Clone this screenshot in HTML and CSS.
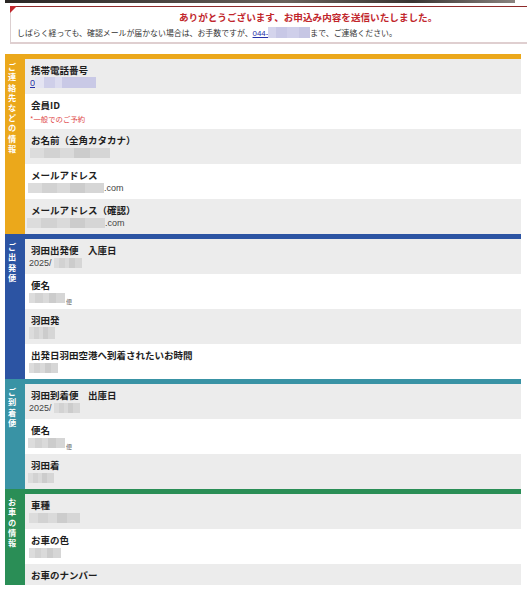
FILE: index.html
```html
<!DOCTYPE html>
<html lang="ja">
<head>
<meta charset="utf-8">
<title>送信完了</title>
<link rel="stylesheet" href="styles.css">
</head>
<body>
<div class="page">
  <div class="hero"></div>
  <div class="notice">
    <span class="corner"></span>
    <p class="notice-title">ありがとうございます、お申込み内容を送信いたしました。</p>
    <p class="notice-text">しばらく経っても、確認メールが届かない場合は、お手数ですが、<a class="tel" href="#">044-</a><span class="blur blur-tel"></span>まで、ご連絡ください。</p>
  </div>

  <section class="sec sec-orange">
    <div class="sec-side"><span class="sec-name">ご連絡先などの情報</span></div>
    <div class="sec-rows">
      <div class="row"><div class="lbl">携帯電話番号</div><div class="val"><a class="tel-val" href="#">0</a><span class="blur blur-purple w61"></span></div></div>
      <div class="row"><div class="lbl">会員ID</div><div class="val note">*一般でのご予約</div></div>
      <div class="row"><div class="lbl">お名前（全角カタカナ）</div><div class="val"><span class="blur w80 ml1"></span></div></div>
      <div class="row"><div class="lbl">メールアドレス</div><div class="val"><span class="blur w76 mlm1"></span>.com</div></div>
      <div class="row"><div class="lbl">メールアドレス（確認）</div><div class="val"><span class="blur w78 mlm2"></span>.com</div></div>
    </div>
  </section>

  <section class="sec sec-blue">
    <div class="sec-side"><span class="sec-name">ご出発便</span></div>
    <div class="sec-rows">
      <div class="row"><div class="lbl">羽田出発便　入庫日</div><div class="val">2025/<span class="blur w28 ml2"></span></div></div>
      <div class="row"><div class="lbl">便名</div><div class="val"><span class="blur w36"></span><span class="bin">便</span></div></div>
      <div class="row"><div class="lbl">羽田発</div><div class="val"><span class="blur w26 tall"></span></div></div>
      <div class="row"><div class="lbl">出発日羽田空港へ到着されたいお時間</div><div class="val"><span class="blur w29"></span></div></div>
    </div>
  </section>

  <section class="sec sec-teal">
    <div class="sec-side"><span class="sec-name">ご到着便</span></div>
    <div class="sec-rows">
      <div class="row"><div class="lbl">羽田到着便　出庫日</div><div class="val">2025/<span class="blur w26 ml2"></span></div></div>
      <div class="row"><div class="lbl">便名</div><div class="val"><span class="blur w37 mlm1"></span><span class="bin">便</span></div></div>
      <div class="row"><div class="lbl">羽田着</div><div class="val"><span class="blur w26 mlm1"></span></div></div>
    </div>
  </section>

  <section class="sec sec-green">
    <div class="sec-side"><span class="sec-name">お車の情報</span></div>
    <div class="sec-rows">
      <div class="row"><div class="lbl">車種</div><div class="val"><span class="blur w51"></span></div></div>
      <div class="row"><div class="lbl">お車の色</div><div class="val"><span class="blur w32"></span></div></div>
      <div class="row row-last"><div class="lbl">お車のナンバー</div></div>
    </div>
  </section>
</div>
</body>
</html>
```

FILE: styles.css
```css
html, body {
  margin: 0;
  padding: 0;
  background: #ffffff;
}
body {
  font-family: "Liberation Sans", "Noto Sans CJK JP", sans-serif;
  color: #222222;
  overflow: hidden;
}
.page {
  width: 527px;
  padding: 0 0 0 5px;
  box-sizing: border-box;
}
.hero {
  width: 510px;
  height: 3px;
  background: linear-gradient(90deg, #2a2624 0%, #4a4440 30%, #6a625c 55%, #3a3532 80%, #8a8480 100%);
}
.notice {
  position: relative;
  margin: 3px 0 0 5px;
  width: 530px;
  height: 38px;
  border-top: 1px solid #8e2a2a;
  border-left: 1px solid #dccfd0;
  border-bottom: 2px solid #dfcfd0;
  padding: 4px 0 0 6px;
  box-sizing: border-box;
  background: #ffffff;
}
.corner {
  position: absolute;
  left: -1px;
  top: -1px;
  width: 0;
  height: 0;
  border-top: 7px solid #c1262c;
  border-right: 7px solid transparent;
}
.notice-title {
  margin: 0 0 3px 162px;
  height: 13px;
  font-size: 9.6px;
  line-height: 13px;
  font-weight: bold;
  color: #c1262c;
  white-space: nowrap;
}
.notice-text {
  margin: 0;
  height: 12px;
  font-size: 7.9px;
  line-height: 12px;
  color: #333333;
  white-space: nowrap;
}
.tel {
  color: #2630a8;
  text-decoration: underline;
}
.blur {
  display: inline-block;
  height: 10px;
  vertical-align: -2px;
  background: linear-gradient(90deg, #dcdcdc 0 18%, #d2d2d2 18% 38%, #dadada 38% 55%, #cccccc 55% 75%, #d6d6d6 75% 100%);
}
.blur-tel {
  width: 42px;
  height: 11px;
  background: linear-gradient(90deg, #d4d4ec 0 20%, #c8c8e6 20% 45%, #cfcfea 45% 75%, #c6c6e4 75% 100%);
}
.blur-purple {
  height: 11px;
  background: linear-gradient(90deg, #e4e4f2 0 14%, #cfcfe9 14% 32%, #dcdcef 32% 44%, #c9c9e6 44% 100%);
}
.w26 { width: 26px; }
.w28 { width: 28px; }
.w29 { width: 29px; }
.w32 { width: 32px; }
.w36 { width: 36px; }
.w37 { width: 37px; }
.w51 { width: 51px; }
.w61 { width: 61px; }
.w76 { width: 76px; }
.w78 { width: 78px; }
.w80 { width: 80px; }
.ml1 { margin-left: 1px; }
.ml2 { margin-left: 2px; }
.mlm1 { margin-left: -1px; }
.mlm2 { margin-left: -2px; }
.tall { height: 12px; }

.sec {
  display: flex;
  width: 516px;
  border-top: 5px solid var(--c);
}
.sec-orange { --c: #eba81b; margin-top: 10px; }
.sec-blue { --c: #2c54a3; }
.sec-teal { --c: #3993a5; }
.sec-green { --c: #2a8e56; }
.sec-side {
  width: 20px;
  flex: none;
  background: var(--c);
  padding: 4px 0 0 0;
  box-sizing: border-box;
}
.sec-name {
  display: block;
  writing-mode: vertical-rl;
  text-orientation: upright;
  font-family: "Noto Sans CJK JP", sans-serif;
  font-size: 8.2px;
  letter-spacing: 2px;
  font-weight: bold;
  color: #ffffff;
  width: 13px;
}
.sec-rows {
  flex: 1;
  display: flex;
  flex-direction: column;
}
.row {
  height: 35px;
  padding: 4px 6px 0 6px;
  box-sizing: border-box;
  background: #ececec;
}
.row:nth-child(even) {
  background: #ffffff;
}
.lbl {
  height: 14px;
  font-family: "Noto Sans CJK JP", sans-serif;
  font-size: 9.5px;
  line-height: 14px;
  font-weight: bold;
  color: #1e1e1e;
  white-space: nowrap;
}
.val {
  height: 13px;
  font-size: 9px;
  line-height: 13px;
  color: #444444;
  white-space: nowrap;
  margin-left: -2px;
}
.row-last {
  height: 21px;
}
.note {
  font-family: "Noto Sans CJK JP", sans-serif;
  color: #e04848;
  font-size: 7.4px;
  margin-left: -1px;
}
.tel-val {
  color: #2630a8;
  text-decoration: underline;
  margin-left: 1px;
}
.bin {
  font-family: "Noto Sans CJK JP", sans-serif;
  font-size: 6px;
  color: #666666;
  margin-left: 1px;
  vertical-align: -3px;
}
```
